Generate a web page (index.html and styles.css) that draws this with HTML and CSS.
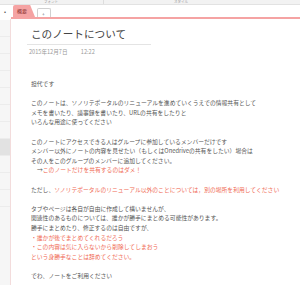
FILE: index.html
```html
<!DOCTYPE html>
<html lang="ja">
<head>
    <meta charset="UTF-8">
    <title>このノートについて</title>
    <link rel="stylesheet" href="styles.css">
</head>
<body>
    <div class="toolbar">
        <span class="tool tool-font">フォント</span>
        <span class="tool tool-style">スタイル</span>
    </div>
    <div class="main">
        <div class="sidebar">
            <div class="side-head">•</div>
            <div class="side-row"></div>
            <div class="side-row"></div>
            <div class="side-row"></div>
            <div class="side-row"></div>
            <div class="side-row"></div>
            <div class="side-row"></div>
            <div class="side-row"></div>
            <div class="side-row active"></div>
            <div class="side-row"></div>
            <div class="side-row"></div>
            <div class="side-row"></div>
        </div>
        <div class="content">
            <div class="tabs">
                <div class="tab tab-active">概要</div>
                <div class="tab tab-add">+</div>
            </div>
            <div class="page">
                <h1 class="title">このノートについて</h1>
                <div class="meta">
                    <span>2015年12月7日</span>
                    <span class="time">12:22</span>
                </div>
                <div class="body">
                    <p>担代です</p>
                    <p>このノートは、ソノリテポータルのリニューアルを進めていくうえでの情報共有として<br>
                    メモを書いたり、議事録を書いたり、URLの共有をしたりと<br>
                    いろんな用途に使ってください</p>
                    <p>このノートにアクセスできる人はグループに参加しているメンバーだけです<br>
                    メンバー以外にノートの内容を見せたい（もしくはOnedriveの共有をしたい）場合は<br>
                    その人をこのグループのメンバーに追加してください。<br>
                    <span class="indent">→<span class="red">このノートだけを共有するのはダメ！</span></span></p>
                    <p>ただし、<span class="red">ソノリテポータルのリニューアル以外のことについては，別の場所を利用してください</span></p>
                    <p>タブやページは各自が自由に作成して構いませんが、<br>
                    関連性のあるものについては、誰かが勝手にまとめる可能性があります。<br>
                    勝手にまとめたり、修正するのは自由ですが、<br>
                    <span class="red">・誰かが後でまとめてくれるだろう<br>
                    ・この内容は気に入らないから削除してしまおう<br>
                    という身勝手なことは辞めてください。</span></p>
                    <p>でわ、ノートをご利用ください</p>
                </div>
            </div>
        </div>
    </div>
</body>
</html>
```

FILE: styles.css
```css
body {
    margin: 0;
    width: 300px;
    height: 285px;
    overflow: hidden;
    background-color: #fff;
    font-family: "Noto Sans CJK JP", "Noto Sans", sans-serif;
    color: #555;
}
.toolbar {
    height: 4px;
    background-color: #f2f2f2;
    border-bottom: 1px solid #e2e2e2;
    display: flex;
    align-items: center;
}
.tool {
    font-size: 3.5px;
    line-height: 4px;
    color: #999;
}
.tool-font {
    margin-left: 44px;
    width: 59px;
    border-right: 1px solid #ddd;
}
.tool-style {
    margin-left: 70px;
}
.main {
    display: flex;
    height: 280px;
}
.sidebar {
    width: 10px;
    flex-shrink: 0;
    background-color: #f6f6f6;
}
.side-head {
    height: 15px;
    background-color: #fff;
    font-size: 6px;
    line-height: 14px;
    text-align: center;
    color: #555;
}
.side-row {
    height: 16px;
    border-bottom: 1px solid #ececec;
}
.side-row.active {
    background-color: #e2e2e2;
}
.content {
    flex: 1;
    display: flex;
    flex-direction: column;
}
.tabs {
    height: 13px;
    display: flex;
    align-items: flex-end;
    padding-left: 2px;
    border-bottom: 2px solid #f5a3a3;
    margin-left: 1px;
}
.tab {
    font-size: 5px;
    box-sizing: border-box;
}
.tab-active {
    width: 22px;
    height: 12px;
    line-height: 12px;
    padding-left: 4px;
    background-color: #f5a3a3;
    color: #8a2c2c;
    border-radius: 2px 2px 0 0;
    clip-path: polygon(0 0, 78% 0, 100% 100%, 0 100%);
}
.tab-add {
    width: 14px;
    height: 9px;
    line-height: 9px;
    margin-left: 2px;
    padding-left: 4px;
    color: #777;
    background-color: #fff;
    border: 1px solid #d0d0d0;
    border-bottom: none;
    border-radius: 2px 2px 0 0;
}
.page {
    flex: 1;
    border-left: 1px solid #f3dcdc;
    padding: 7px 0 0 20px;
}
.title {
    margin: 0;
    font-size: 10.6px;
    line-height: 15px;
    font-weight: 400;
    color: #444;
    width: 120px;
    padding-bottom: 3px;
    border-bottom: 1px solid #e4e4e4;
    margin-left: -4px;
    padding-left: 4px;
}
.meta {
    font-size: 5.6px;
    line-height: 8px;
    color: #999;
    margin-top: 3px;
    margin-left: -2px;
}
.time {
    margin-left: 12px;
}
.body {
    margin-top: 23px;
    font-size: 5.8px;
    line-height: 9.6px;
}
.body p {
    margin: 0 0 9.6px 0;
    white-space: nowrap;
}
.red {
    color: #f06a55;
}
.indent {
    padding-left: 6px;
}
```
